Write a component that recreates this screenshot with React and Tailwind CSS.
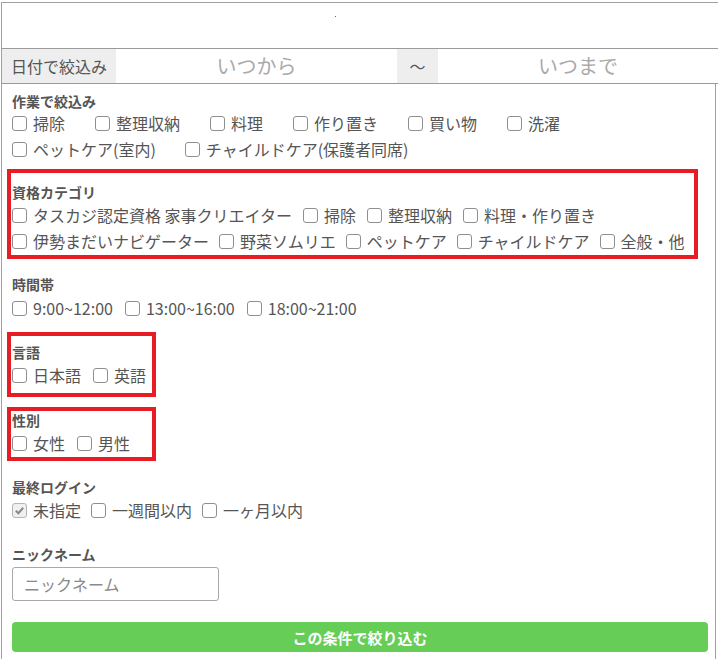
const font = { fontFamily: '"Noto Sans CJK JP", "Noto Sans", sans-serif' };

const Box = ({ checked }) => (
  <span
    className={`flex h-[15px] w-[15px] shrink-0 items-center justify-center rounded-[3px] border ${
      checked ? 'border-[#b5b5b5] bg-[#f0f0f0]' : 'border-[#8f8f8f] bg-white'
    }`}
  >
    {checked && (
      <svg viewBox="0 0 12 12" className="h-[11px] w-[11px]">
        <path d="M2 6.2 L4.8 9 L10 3" fill="none" stroke="#8a8a8a" strokeWidth="2.2" />
      </svg>
    )}
  </span>
);

const Item = ({ label, checked }) => (
  <label className="flex items-center whitespace-nowrap">
    <Box checked={checked} />
    <span className="ml-[6px]">{label}</span>
  </label>
);

const Row = ({ items, gap = 'gap-x-[12px]', checked = [] }) => (
  <div className={`flex h-[26px] items-center ${gap}`}>
    {items.map((it) => (
      <Item key={it} label={it} checked={checked.includes(it)} />
    ))}
  </div>
);

const Title = ({ children, h = 'h-[20px]' }) => (
  <div className={`flex ${h} items-center text-[14px] font-bold leading-none text-[#555]`}>{children}</div>
);

const Frame = ({ className }) => (
  <div className={`pointer-events-none absolute border-[4px] border-[#e81c24] ${className}`} />
);

export default function App() {
  return (
    <div className="w-[718px] bg-white pl-px text-[16px] leading-none text-[#555]" style={font}>
      <div className="mt-[2px] border-l border-t border-[#a0a0a0]">
        {/* top blank bar */}
        <div className="h-[45px]">
          <div className="ml-[333px] pt-[13px]">
            <div className="h-px w-px bg-[#666]" />
          </div>
        </div>

        {/* date filter */}
        <div className="flex h-[36px] border-y border-[#9a9a9a]">
          <div className="flex w-[114px] items-center bg-[#eeeeee] pl-[9px] text-[16px] text-[#555]">日付で絞込み</div>
          <div className="flex w-[281px] items-center justify-center text-[20px] text-[#aaa]">いつから</div>
          <div className="flex w-[41px] items-center justify-center bg-[#eeeeee] text-[16px] text-[#555]">〜</div>
          <div className="flex flex-1 items-center justify-center text-[20px] text-[#aaa]">いつまで</div>
        </div>

        {/* filters */}
        <div className="mr-[2px] border-r border-[#a0a0a0] pb-[7px] pl-[10px] pr-[7px] pt-[8px]">
          <section>
            <Title h="h-[18px]">作業で絞込み</Title>
            <Row gap="gap-x-[30px]" items={['掃除', '整理収納', '料理', '作り置き', '買い物', '洗濯']} />
            <Row gap="gap-x-[29px]" items={['ペットケア(室内)', 'チャイルドケア(保護者同席)']} />
          </section>

          <section className="relative mt-[20px]">
            <Frame className="-bottom-[5px] -left-[5px] -top-[13px] right-[10px]" />
            <Title>資格カテゴリ</Title>
            <Row gap="gap-x-[11px]" items={['タスカジ認定資格 家事クリエイター', '掃除', '整理収納', '料理・作り置き']} />
            <Row gap="gap-x-[10px]" items={['伊勢まだいナビゲーター', '野菜ソムリエ', 'ペットケア', 'チャイルドケア', '全般・他']} />
          </section>

          <section className="mt-[19px]">
            <Title h="h-[22px]">時間帯</Title>
            <Row gap="gap-x-[12px]" items={['9:00~12:00', '13:00~16:00', '18:00~21:00']} />
          </section>

          <section className="relative mt-[21px]">
            <Frame className="-bottom-[9px] -left-[5px] -top-[10px] w-[149px]" />
            <Title>言語</Title>
            <Row items={['日本語', '英語']} />
          </section>

          <section className="relative mt-[22px]">
            <Frame className="-bottom-[5px] -left-[5px] -top-[3px] w-[149px]" />
            <Title>性別</Title>
            <Row items={['女性', '男性']} />
          </section>

          <section className="mt-[21px]">
            <Title>最終ログイン</Title>
            <Row gap="gap-x-[10px]" items={['未指定', '一週間以内', '一ヶ月以内']} checked={['未指定']} />
          </section>

          <section className="mt-[21px]">
            <Title>ニックネーム</Title>
            <input
              type="text"
              placeholder="ニックネーム"
              className="mt-[3px] h-[34px] w-[207px] rounded-[3px] border border-[#a8a8a8] px-[11px] text-[16px] text-[#555] outline-none placeholder:text-[#8a8a8a]"
            />
          </section>

          <button className="mt-[21px] flex h-[30px] w-full items-center justify-center rounded-[4px] bg-[#66cd57] text-[15px] font-bold text-white">
            この条件で絞り込む
          </button>
        </div>
      </div>
    </div>
  );
}
